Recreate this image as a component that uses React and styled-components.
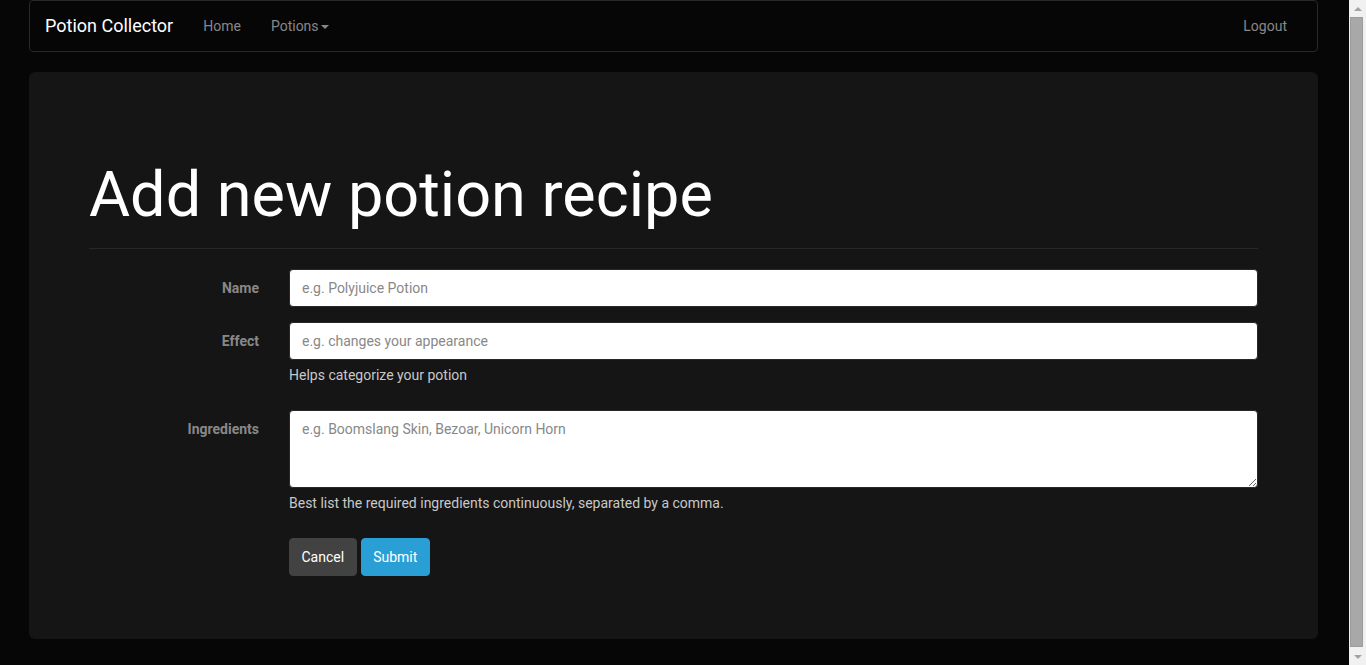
import React from 'react';
import styled, { createGlobalStyle } from 'styled-components';

const GlobalStyle = createGlobalStyle`
  html, body {
    margin: 0;
    padding: 0;
    height: 100%;
    overflow: hidden;
    background: #060606;
    font-family: Roboto, "Liberation Sans", Arial, sans-serif;
    font-size: 14px;
    line-height: 20px;
    color: #888;
  }
  * {
    box-sizing: border-box;
  }
`;

const Shell = styled.div`
  display: flex;
  height: 100vh;
`;

const Page = styled.div`
  flex: 1;
  min-width: 0;
  padding: 0 31px 0 29px;
`;

// fake classic scrollbar on the right edge
const Scrollbar = styled.div`
  width: 17px;
  background: #f1f1f1;
  display: flex;
  flex-direction: column;
  align-items: center;
`;

const ScrollArrow = styled.div`
  height: 17px;
  width: 100%;
  display: flex;
  align-items: center;
  justify-content: center;

  &::before {
    content: '';
    border-left: 4px solid transparent;
    border-right: 4px solid transparent;
    ${(p) => (p.$down ? 'border-top: 4px solid #a3a3a3;' : 'border-bottom: 4px solid #a3a3a3;')}
  }
`;

const ScrollThumb = styled.div`
  flex: 1;
  width: 13px;
  margin: 0 2px 1px 1px;
  align-self: flex-start;
  background: #a8a8a8;
  border: 1px solid #9c9c9c;
`;

const Navbar = styled.nav`
  display: flex;
  align-items: center;
  min-height: 52px;
  background: #060606;
  border: 1px solid #282828;
  border-radius: 4px;
  margin-bottom: 20px;
  padding: 0 15px 0 0;
`;

const Brand = styled.a`
  display: block;
  padding: 15px;
  font-size: 18px;
  line-height: 20px;
  color: #fff;
  text-decoration: none;
`;

const NavList = styled.ul`
  display: flex;
  list-style: none;
  margin: 0;
  padding: 0;
  margin-left: ${(p) => (p.$right ? 'auto' : '0')};
`;

const NavLink = styled.a`
  display: block;
  padding: 15px;
  line-height: 20px;
  color: #888;
  text-decoration: none;
`;

const Caret = styled.span`
  display: inline-block;
  width: 0;
  height: 0;
  margin-left: 2px;
  vertical-align: middle;
  border-top: 4px solid #888;
  border-left: 4px solid transparent;
  border-right: 4px solid transparent;
`;

const Jumbotron = styled.div`
  background: #151515;
  border-radius: 6px;
  padding: 48px 60px;
  margin-bottom: 30px;
`;

const PageHeader = styled.div`
  margin: 40px 0 20px;
  padding-bottom: 9px;
  border-bottom: 1px solid #282828;
`;

const Title = styled.h1`
  margin: 0 0 10px;
  font-size: 63px;
  line-height: 69px;
  font-weight: 400;
  color: #fff;
`;

const FormGroup = styled.div`
  display: grid;
  grid-template-columns: 170px 1fr;
  column-gap: 30px;
  margin-bottom: 15px;
`;

const Label = styled.label`
  text-align: right;
  padding-top: 9px;
  font-weight: 700;
  color: #888;
`;

const Field = styled.div`
  display: flex;
  flex-direction: column;
`;

const Input = styled.input`
  height: 38px;
  width: 100%;
  padding: 8px 12px;
  font-family: inherit;
  font-size: 14px;
  line-height: 20px;
  color: #888;
  background: #fff;
  border: 1px solid #282828;
  border-radius: 4px;

  &::placeholder {
    color: #888;
  }
`;

const TextArea = styled.textarea`
  display: block;
  height: 78px;
  width: 100%;
  padding: 8px 12px;
  font-family: inherit;
  font-size: 14px;
  line-height: 20px;
  color: #888;
  background: #fff;
  border: 1px solid #282828;
  border-radius: 4px;

  &::placeholder {
    color: #888;
  }
`;

const HelpBlock = styled.span`
  display: block;
  margin: 5px 0 10px;
  color: #c8c8c8;
`;

const Buttons = styled.div`
  display: flex;
  gap: 4px;
`;

const Button = styled.button`
  height: 38px;
  padding: 8px 11.5px;
  font-family: inherit;
  font-size: 14px;
  line-height: 20px;
  color: #fff;
  background: ${(p) => (p.$primary ? '#2a9fd6' : '#424242')};
  border: 1px solid ${(p) => (p.$primary ? '#2a9fd6' : '#424242')};
  border-radius: 4px;
  cursor: pointer;
`;

export default function App() {
  return (
    <Shell>
      <GlobalStyle />
      <Page>
        <Navbar>
          <Brand href="#">Potion Collector</Brand>
          <NavList>
            <li><NavLink href="#">Home</NavLink></li>
            <li><NavLink href="#">Potions<Caret /></NavLink></li>
          </NavList>
          <NavList $right>
            <li><NavLink href="#">Logout</NavLink></li>
          </NavList>
        </Navbar>

        <Jumbotron>
          <PageHeader>
            <Title>Add new potion recipe</Title>
          </PageHeader>

          <form onSubmit={(e) => e.preventDefault()}>
            <FormGroup>
              <Label htmlFor="name">Name</Label>
              <Field>
                <Input id="name" placeholder="e.g. Polyjuice Potion" />
              </Field>
            </FormGroup>

            <FormGroup>
              <Label htmlFor="effect">Effect</Label>
              <Field>
                <Input id="effect" placeholder="e.g. changes your appearance" />
                <HelpBlock>Helps categorize your potion</HelpBlock>
              </Field>
            </FormGroup>

            <FormGroup>
              <Label htmlFor="ingredients">Ingredients</Label>
              <Field>
                <TextArea id="ingredients" rows={3} placeholder="e.g. Boomslang Skin, Bezoar, Unicorn Horn" />
                <HelpBlock>Best list the required ingredients continuously, separated by a comma.</HelpBlock>
              </Field>
            </FormGroup>

            <FormGroup>
              <span />
              <Buttons>
                <Button type="button">Cancel</Button>
                <Button type="submit" $primary>Submit</Button>
              </Buttons>
            </FormGroup>
          </form>
        </Jumbotron>
      </Page>
      <Scrollbar>
        <ScrollArrow />
        <ScrollThumb />
        <ScrollArrow $down />
      </Scrollbar>
    </Shell>
  );
}
